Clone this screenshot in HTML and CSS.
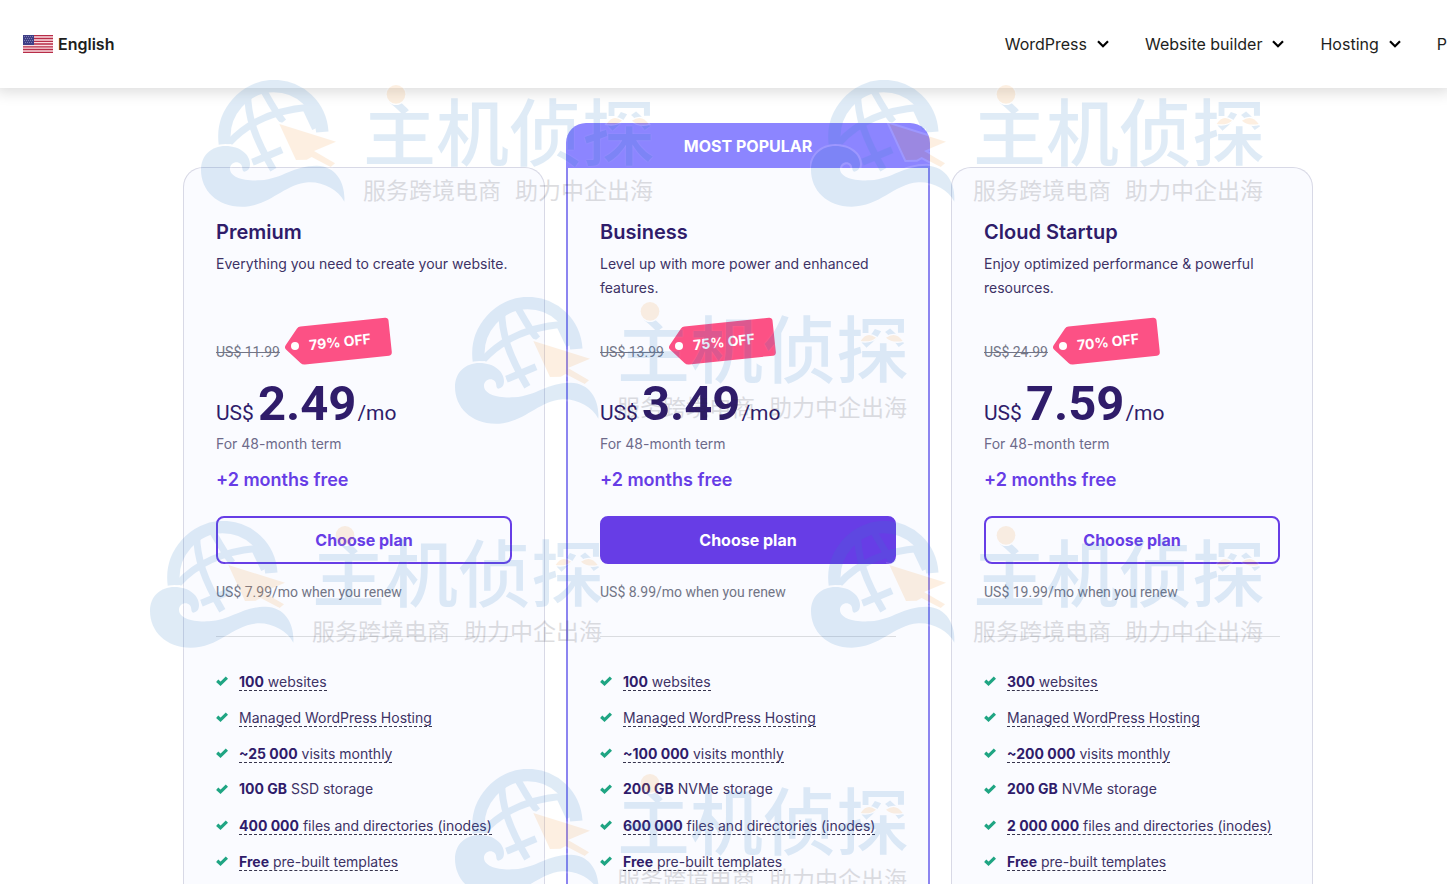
FILE: index.html
```html
<!DOCTYPE html>
<html lang="en">
<head>
<meta charset="utf-8">
<title>Hosting plans</title>
<link rel="stylesheet" href="styles.css">
</head>
<body>
<svg class="defs" aria-hidden="true">
  <symbol id="chevron" viewBox="0 0 12 8"><path d="M1 1.300 6 6.300l5-5" fill="none" stroke="currentColor" stroke-width="2.200"/></symbol>
  <symbol id="check" viewBox="0 0 12 10"><path d="M1.200 4.800 4.500 7.800 10.900 1.600" fill="none" stroke="#1fa583" stroke-width="3.200"/></symbol>
  <symbol id="tag" viewBox="0 0 108 48"><path d="M16.500 9.500 101 .8Q104 .6 104.500 3.500L107.800 35Q108 38.300 105 38.700L21 47.500Q18.500 47.800 16.500 46L2 32.500Q0 30.500 1.800 28L13 11.500Q14.300 9.700 16.500 9.500Z" fill="#fc5185"/><circle cx="11" cy="29" r="4" fill="#fff"/></symbol>
  <symbol id="globe" viewBox="0 0 1362 384">
    <g fill="none" stroke="#3080ca">
      <path d="M75 195C60 95 140 18 221 18C300 18 362 78 367 156" stroke-width="37"/>
      <path d="M143 35C142 110 165 175 220 269M190 30C210 65 225 95 250 125M88 188C145 125 225 90 330 82M157 247 246 209" stroke-width="21"/>
      <path d="M315 75 348 145" stroke-width="25"/>
    </g>
    <path d="M238 132 408 185 342 213 405 250 392 261 335 231 320 239 288 240Z" fill="#f29b3e" stroke="#fff" stroke-width="12" paint-order="stroke"/>
    <path d="M76 198C122 198 150 225 150 252C150 265 145 273 133 275C124 273 130 260 122 252C110 240 90 250 90 266C90 291 130 304 180 301C250 295 280 257 350 257C410 258 437 312 433 365C415 330 370 305 325 307C250 313 210 380 125 380C50 380 3 330 3 270C3 225 35 198 76 198Z" fill="#3080ca" stroke="#fff" stroke-width="12" paint-order="stroke"/>
    <circle cx="588" cy="43" r="28" fill="#f29b3e" stroke="#fff" stroke-width="8" paint-order="stroke"/>
    <path d="M1220 132Q1238 102 1266 122Q1252 136 1220 132ZM1296 122Q1326 102 1346 132Q1314 138 1296 122Z" fill="#f29b3e" stroke="#fff" stroke-width="8" paint-order="stroke"/>
  </symbol>
</svg>
<div class="page">
  <header class="header">
    <a class="lang" href="#">
      <svg class="flag" viewBox="0 0 30 18"><path fill="#fbdfe3" d="M0 0h30v18H0z"/><path stroke="#b72d48" stroke-width="1.300" d="M0 .7h30M0 3.500h30M0 6.300h30M0 9h30M0 11.800h30M0 14.500h30M0 17.300h30"/><path fill="#3f3f86" d="M0 0h11v10H0z"/><path stroke="#9a9ac6" stroke-width=".7" stroke-dasharray="1 1" d="M1 1.500h9M2 3.500h8M1 5.500h9M2 7.500h8"/></svg>
      English
    </a>
    <nav class="nav">
      <a href="#">WordPress <svg class="chevron"><use href="#chevron"/></svg></a>
      <a href="#">Website builder <svg class="chevron"><use href="#chevron"/></svg></a>
      <a href="#">Hosting <svg class="chevron"><use href="#chevron"/></svg></a>
      <a href="#">P</a>
    </nav>
  </header>

  <main class="plans">
    <section class="card">
      <h2>Premium</h2>
      <p class="desc">Everything you need to create your website.</p>
      <div class="deal"><s>US$ 11.99</s><span class="badge"><svg><use href="#tag"/></svg><b>79% OFF</b></span></div>
      <p class="price"><span>US$</span> <strong>2.49</strong><span>/mo</span></p>
      <p class="term">For 48-month term</p>
      <p class="bonus">+2 months free</p>
      <button class="choose">Choose plan</button>
      <p class="renew">US$ 7.99/mo when you renew</p>
      <ul class="features">
        <li><svg><use href="#check"/></svg><span class="hint"><b>100</b> websites</span></li>
        <li><svg><use href="#check"/></svg><span class="hint">Managed WordPress Hosting</span></li>
        <li><svg><use href="#check"/></svg><span class="hint"><b>~25 000</b> visits monthly</span></li>
        <li><svg><use href="#check"/></svg><span><b>100 GB</b> SSD storage</span></li>
        <li><svg><use href="#check"/></svg><span class="hint"><b>400 000</b> files and directories (inodes)</span></li>
        <li><svg><use href="#check"/></svg><span class="hint"><b>Free</b> pre-built templates</span></li>
      </ul>
    </section>

    <div class="popular">
      <div class="banner">MOST POPULAR</div>
      <section class="card">
        <h2>Business</h2>
        <p class="desc">Level up with more power and enhanced features.</p>
        <div class="deal"><s>US$ 13.99</s><span class="badge"><svg><use href="#tag"/></svg><b>75% OFF</b></span></div>
        <p class="price"><span>US$</span> <strong>3.49</strong><span>/mo</span></p>
        <p class="term">For 48-month term</p>
        <p class="bonus">+2 months free</p>
        <button class="choose primary">Choose plan</button>
        <p class="renew">US$ 8.99/mo when you renew</p>
        <ul class="features">
          <li><svg><use href="#check"/></svg><span class="hint"><b>100</b> websites</span></li>
          <li><svg><use href="#check"/></svg><span class="hint">Managed WordPress Hosting</span></li>
          <li><svg><use href="#check"/></svg><span class="hint"><b>~100 000</b> visits monthly</span></li>
          <li><svg><use href="#check"/></svg><span><b>200 GB</b> NVMe storage</span></li>
          <li><svg><use href="#check"/></svg><span class="hint"><b>600 000</b> files and directories (inodes)</span></li>
          <li><svg><use href="#check"/></svg><span class="hint"><b>Free</b> pre-built templates</span></li>
        </ul>
      </section>
    </div>

    <section class="card">
      <h2>Cloud Startup</h2>
      <p class="desc">Enjoy optimized performance &amp; powerful resources.</p>
      <div class="deal"><s>US$ 24.99</s><span class="badge"><svg><use href="#tag"/></svg><b>70% OFF</b></span></div>
      <p class="price"><span>US$</span> <strong>7.59</strong><span>/mo</span></p>
      <p class="term">For 48-month term</p>
      <p class="bonus">+2 months free</p>
      <button class="choose">Choose plan</button>
      <p class="renew">US$ 19.99/mo when you renew</p>
      <ul class="features">
        <li><svg><use href="#check"/></svg><span class="hint"><b>300</b> websites</span></li>
        <li><svg><use href="#check"/></svg><span class="hint">Managed WordPress Hosting</span></li>
        <li><svg><use href="#check"/></svg><span class="hint"><b>~200 000</b> visits monthly</span></li>
        <li><svg><use href="#check"/></svg><span><b>200 GB</b> NVMe storage</span></li>
        <li><svg><use href="#check"/></svg><span class="hint"><b>2 000 000</b> files and directories (inodes)</span></li>
        <li><svg><use href="#check"/></svg><span class="hint"><b>Free</b> pre-built templates</span></li>
      </ul>
    </section>
  </main>

  <div class="mark m1" lang="zh"><p class="brand">主机侦探</p><p class="slogan"><span>服务跨境电商</span><span>助力中企出海</span></p><svg><use href="#globe"/></svg></div>
  <div class="mark m2" lang="zh"><p class="brand">主机侦探</p><p class="slogan"><span>服务跨境电商</span><span>助力中企出海</span></p><svg><use href="#globe"/></svg></div>
  <div class="mark m3" lang="zh"><p class="brand">主机侦探</p><p class="slogan"><span>服务跨境电商</span><span>助力中企出海</span></p><svg><use href="#globe"/></svg></div>
  <div class="mark m4" lang="zh"><p class="brand">主机侦探</p><p class="slogan"><span>服务跨境电商</span><span>助力中企出海</span></p><svg><use href="#globe"/></svg></div>
  <div class="mark m5" lang="zh"><p class="brand">主机侦探</p><p class="slogan"><span>服务跨境电商</span><span>助力中企出海</span></p><svg><use href="#globe"/></svg></div>
  <div class="mark m6" lang="zh"><p class="brand">主机侦探</p><p class="slogan"><span>服务跨境电商</span><span>助力中企出海</span></p><svg><use href="#globe"/></svg></div>
</div>
</body>
</html>
```

FILE: styles.css
```css
* { box-sizing: border-box; }
body, h2, p, ul { margin: 0; padding: 0; }
body {
  background: #fff;
  color: #36344d;
  font-family: Inter, "Noto Sans", sans-serif;
  font-size: 14px;
  line-height: 24px;
}
a { color: inherit; text-decoration: none; }
.defs { position: absolute; width: 0; height: 0; }

.page {
  position: relative;
  display: flex;
  flex-direction: column;
  height: 100vh;
  overflow: hidden;
}

.header {
  position: relative;
  display: flex;
  flex: none;
  align-items: center;
  justify-content: space-between;
  height: 88px;
  padding-left: 23px;
  background: #fff;
  box-shadow: 0 0 14px 4px rgba(0, 0, 0, .14);
  color: #1d1e20;
  font-size: 16px;
}
.lang { display: flex; align-items: center; gap: 5px; font-weight: 600; }
.flag { width: 30px; height: 18px; }
.nav { display: flex; gap: 36px; }
.nav a { display: flex; align-items: center; gap: 10px; }
.chevron { width: 12px; height: 8px; color: #000; }

.plans {
  display: grid;
  grid-template-columns: repeat(3, minmax(0, 1fr));
  gap: 22px;
  align-items: start;
  flex: 1;
  padding: 35px 134px 0 183px;
}
.card {
  margin-top: 44px;
  padding: 48px 32px 12px;
  border: 1px solid #d8d9e6;
  border-bottom: 0;
  border-radius: 20px 20px 0 0;
  background: #fafbff;
}
.popular { margin: 0 -1px; }
.popular .card { margin-top: 0; padding-top: 48px; border: 2px solid #8c85f0; border-width: 0 2px; border-radius: 0; }
.banner {
  padding: 11px 0 10px;
  border-radius: 20px 20px 0 0;
  background: #8c85ff;
  color: #fff;
  font-size: 16px;
  font-weight: 700;
  line-height: 24px;
  text-align: center;
}

h2 { color: #2f1c6a; font-size: 20px; font-weight: 600; line-height: 32px; margin-bottom: 4px; }
.desc { min-height: 48px; }
.desc, .features { color: #3d3265; }

.deal { display: flex; align-items: flex-end; gap: 4px; height: 64px; margin-bottom: 12px; }
.deal s { color: #727586; font-family: Roboto, sans-serif; }
.badge { position: relative; width: 108px; height: 48px; margin-bottom: -1px; }
.badge svg { position: absolute; inset: 0; width: 108px; height: 48px; }
.badge b {
  position: absolute;
  inset: 13px 0 11px 4px;
  color: #fff;
  text-align: center;
  transform: rotate(-6deg);
}

.price {
  display: flex;
  align-items: baseline;
  height: 56px;
  color: #2f1c6a;
  font-family: Roboto, sans-serif;
  font-size: 21px;
  line-height: 56px;
  white-space: nowrap;
}
.price strong { margin: 0 1px 0 4px; font-size: 49px; font-weight: 700; }
.term { color: #6d6a8a; }
.bonus { margin-top: 12px; color: #673de6; font-size: 18px; font-weight: 600; }
.choose {
  display: block;
  width: 100%;
  height: 48px;
  margin: 24px 0 16px;
  border: 2px solid #673de6;
  border-radius: 8px;
  background: transparent;
  color: #673de6;
  font: 700 16px/24px Inter, sans-serif;
}
.choose.primary { background: #673de6; color: #fff; }
.renew { color: #727586; padding-bottom: 32px; border-bottom: 1px solid #dadce0; font-family: Roboto, sans-serif; }

.features { display: flex; flex-direction: column; gap: 12px; padding-top: 32px; list-style: none; }
.features li { display: flex; align-items: center; gap: 11px; height: 24px; white-space: nowrap; }
.features svg { flex: none; width: 12px; height: 10px; }
.features b { color: #2f1c6a; }
.hint { height: 19px; border-bottom: 1px dashed #36344d; line-height: 19px; }

.mark {
  position: absolute;
  width: 454px;
  height: 128px;
  padding-left: 163px;
  opacity: .15;
  pointer-events: none;
  white-space: nowrap;
  font-family: "Noto Sans CJK SC", sans-serif;
}
.mark svg { position: absolute; inset: 0; width: 454px; height: 128px; }
.brand {
  padding-top: 10px;
  color: #3080ca;
  font-size: 73px;
  font-weight: 500;
  line-height: 76px;
  text-shadow: 0 0 2px #fff;
}
.slogan { display: flex; gap: 14px; padding-top: 9px; color: #232330; font-size: 23px; line-height: 28px; }
.m1 { left: 200px; top: 80px; }
.m2 { left: 810px; top: 80px; }
.m3 { left: 454px; top: 297px; }
.m4 { left: 149px; top: 521px; }
.m5 { left: 810px; top: 521px; }
.m6 { left: 454px; top: 769px; }
```
